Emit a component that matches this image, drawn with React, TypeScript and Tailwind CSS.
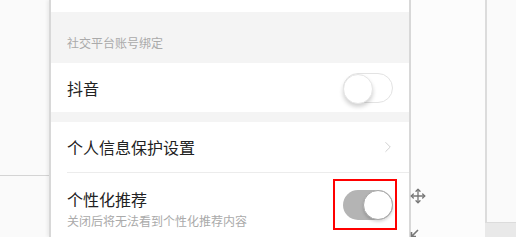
import { Move, ChevronRight } from "lucide-react";

const Toggle = ({ on }: { on: boolean }) => (
  <div
    className={`relative w-[50px] h-[30px] rounded-full ${
      on ? "bg-[#b4b4b4]" : "bg-white border border-[#e3e3e3]"
    }`}
  >
    <div
      className={`absolute top-0 w-[30px] h-[30px] rounded-full bg-white ${
        on
          ? "right-0 border border-[#a8a8a8] shadow-[0_2px_3px_rgba(0,0,0,0.15)]"
          : "-left-px -top-px border border-[#e6e6e6] shadow-[0_3px_4px_rgba(0,0,0,0.18)]"
      }`}
    />
  </div>
);

const App = () => {
  return (
    <div
      className="relative w-[516px] h-[237px] overflow-hidden flex bg-[#fafafa]"
      style={{ fontFamily: '"Noto Sans CJK SC", "Noto Sans", sans-serif' }}
    >
      {/* Left strip */}
      <div className="w-[49px] shrink-0 flex flex-col">
        <div className="h-[176px] border-b border-[#d4d4d4]" />
      </div>

      {/* Settings panel */}
      <div className="w-[362px] shrink-0 flex flex-col bg-white border-l-2 border-[#d8d8d8] border-r-2 shadow-[-2px_0_3px_rgba(0,0,0,0.06)]">
        <div className="h-[12px] bg-white" />
        <div className="h-[51px] bg-[#f4f4f4] flex items-end pb-[12px] pl-[16px] text-[12px] leading-[16px] text-[#aaaaaa]">
          社交平台账号绑定
        </div>
        <div className="h-[49px] flex items-center justify-between pl-[16px] pr-[16px]">
          <span className="text-[16px] text-[#222222]">抖音</span>
          <Toggle on={false} />
        </div>
        <div className="h-[10px] bg-[#f4f4f4]" />
        <div className="h-[50px] flex items-center justify-between pl-[16px] pr-[12px]">
          <span className="text-[16px] text-[#222222]">个人信息保护设置</span>
          <ChevronRight size={18} strokeWidth={1.2} className="text-[#cccccc]" />
        </div>
        <div className="ml-[16px] h-px bg-[#ececec]" />
        <div className="flex items-start justify-between pl-[16px] pr-[16px] pt-[16px]">
          <div className="flex flex-col">
            <span className="text-[16px] leading-[20px] text-[#222222]">个性化推荐</span>
            <span className="text-[12px] leading-[16px] mt-[4px] text-[#aaaaaa]">
              关闭后将无法看到个性化推荐内容
            </span>
          </div>
          <div className="-mt-[10px] -mr-[4px] border-2 border-[#ff0000] pl-[8px] pr-[2px] pt-[9px] pb-[8px]">
            <Toggle on={true} />
          </div>
        </div>
      </div>

      {/* Right area */}
      <div className="w-[74px] shrink-0 bg-[#fcfcfc]" />
      <div className="flex-1 flex flex-col">
        <div className="h-[223px] bg-[#fafafa] border-l-2 border-b border-[#dcdcdc]" />
        <div className="flex-1 bg-[#e9e9e9]" />
      </div>

      {/* Handles */}
      <Move size={16} strokeWidth={2} className="absolute left-[410px] top-[188px] text-[#777777]" />
      <svg
        width="9"
        height="9"
        viewBox="0 0 9 9"
        className="absolute left-[410px] top-[229px] text-[#777777]"
        fill="none"
        stroke="currentColor"
        strokeWidth="1.6"
      >
        <path d="M8 1 L1.5 7.5 M1.5 3 V7.5 H6" />
      </svg>
    </div>
  );
};

export default App;
